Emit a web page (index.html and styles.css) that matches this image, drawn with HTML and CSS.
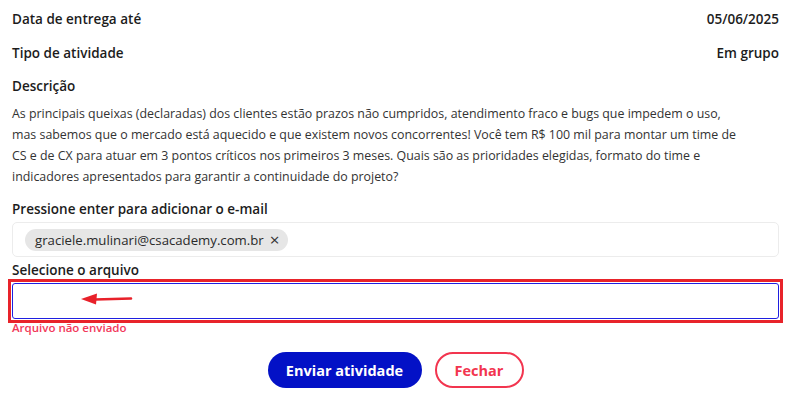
FILE: index.html
```html
<!DOCTYPE html>
<html lang="pt-BR">
<head>
<meta charset="utf-8">
<link rel="stylesheet" href="styles.css">
</head>
<body>
<div class="page">
  <div class="info-row"><span class="label">Data de entrega até</span><span class="value">05/06/2025</span></div>
  <div class="info-row"><span class="label">Tipo de atividade</span><span class="value">Em grupo</span></div>
  <div class="desc-label label">Descrição</div>
  <p class="desc">As principais queixas (declaradas) dos clientes estão prazos não cumpridos, atendimento fraco e bugs que impedem o uso,<br>mas sabemos que o mercado está aquecido e que existem novos concorrentes! Você tem R$ 100 mil para montar um time de<br>CS e de CX para atuar em 3 pontos críticos nos primeiros 3 meses. Quais são as prioridades elegidas, formato do time e<br>indicadores apresentados para garantir a continuidade do projeto?</p>

  <div class="field-label">Pressione enter para adicionar o e-mail</div>
  <div class="email-box">
    <span class="chip">graciele.mulinari@csacademy.com.br <span class="chip-x">×</span></span>
  </div>

  <div class="field-label file-label">Selecione o arquivo</div>
  <div class="annot">
    <div class="file-wrap">
      <div class="file-input"></div>
      <svg class="arrow" width="52" height="12" viewBox="0 0 52 12">
        <path d="M50 5.5 L14 6.5" stroke="#e8212a" stroke-width="2.6" fill="none" stroke-linecap="round"/>
        <path d="M0 6 L16 0.5 L15 11.5 Z" fill="#e8212a"/>
      </svg>
    </div>
  </div>
  <div class="error">Arquivo não enviado</div>

  <div class="actions">
    <button class="btn btn-primary">Enviar atividade</button>
    <button class="btn btn-outline">Fechar</button>
  </div>
</div>
</body>
</html>
```
FILE: styles.css
```css
* { box-sizing: border-box; }
html, body { margin: 0; padding: 0; background: #fff; }
body {
  font-family: "Open Sans", "Noto Sans", sans-serif;
  color: #1e1e1e;
}
.page {
  padding: 2px 12px 0 12px;
}
.info-row {
  height: 34px;
  display: flex;
  align-items: center;
  justify-content: space-between;
}
.label, .value {
  font-size: 13.5px;
  font-weight: 600;
  color: #1c1c1c;
}
.desc-label {
  height: 31px;
  display: flex;
  align-items: center;
}
.desc {
  margin: 2px 0 0 0;
  font-size: 12.4px;
  line-height: 21px;
  color: #333;
  white-space: nowrap;
}
.field-label {
  margin-top: 12px;
  font-size: 13.5px;
  font-weight: 600;
  line-height: 20px;
  color: #1c1c1c;
}
.email-box {
  margin-top: 3px;
  height: 35px;
  border: 1px solid #ececec;
  border-radius: 5px;
  padding: 0 12px;
  display: flex;
  align-items: center;
}
.chip {
  height: 22px;
  border-radius: 11px;
  background: #e6e6e6;
  padding: 0 9px 0 10px;
  display: inline-flex;
  align-items: center;
  font-size: 13.2px;
  color: #2a2a2a;
}
.chip-x {
  margin-left: 6px;
  font-size: 17px;
  line-height: 1;
  color: #333;
}
.file-label {
  margin-top: 3px;
}
.annot {
  margin: -1px -4px 0 -4px;
  border: 3px solid #e8232a;
  padding: 1px;
}
.file-wrap {
  position: relative;
}
.file-input {
  height: 36px;
  border: 1px solid #1f1fe0;
  border-radius: 3px;
}
.arrow {
  position: absolute;
  left: 69px;
  top: 10px;
}
.error {
  font-size: 11.5px;
  font-weight: 600;
  line-height: 14px;
  color: #f2385a;
  margin-top: -2px;
}
.actions {
  margin-top: 17px;
  display: flex;
  justify-content: center;
  gap: 13px;
}
.btn {
  height: 36px;
  border-radius: 18px;
  font-family: inherit;
  font-size: 14.5px;
  font-weight: 700;
  cursor: pointer;
}
.btn-primary {
  width: 154px;
  background: #0311c6;
  color: #fff;
  border: none;
}
.btn-outline {
  width: 89px;
  background: #fff;
  color: #f2354f;
  border: 2px solid #f2354f;
}
```
